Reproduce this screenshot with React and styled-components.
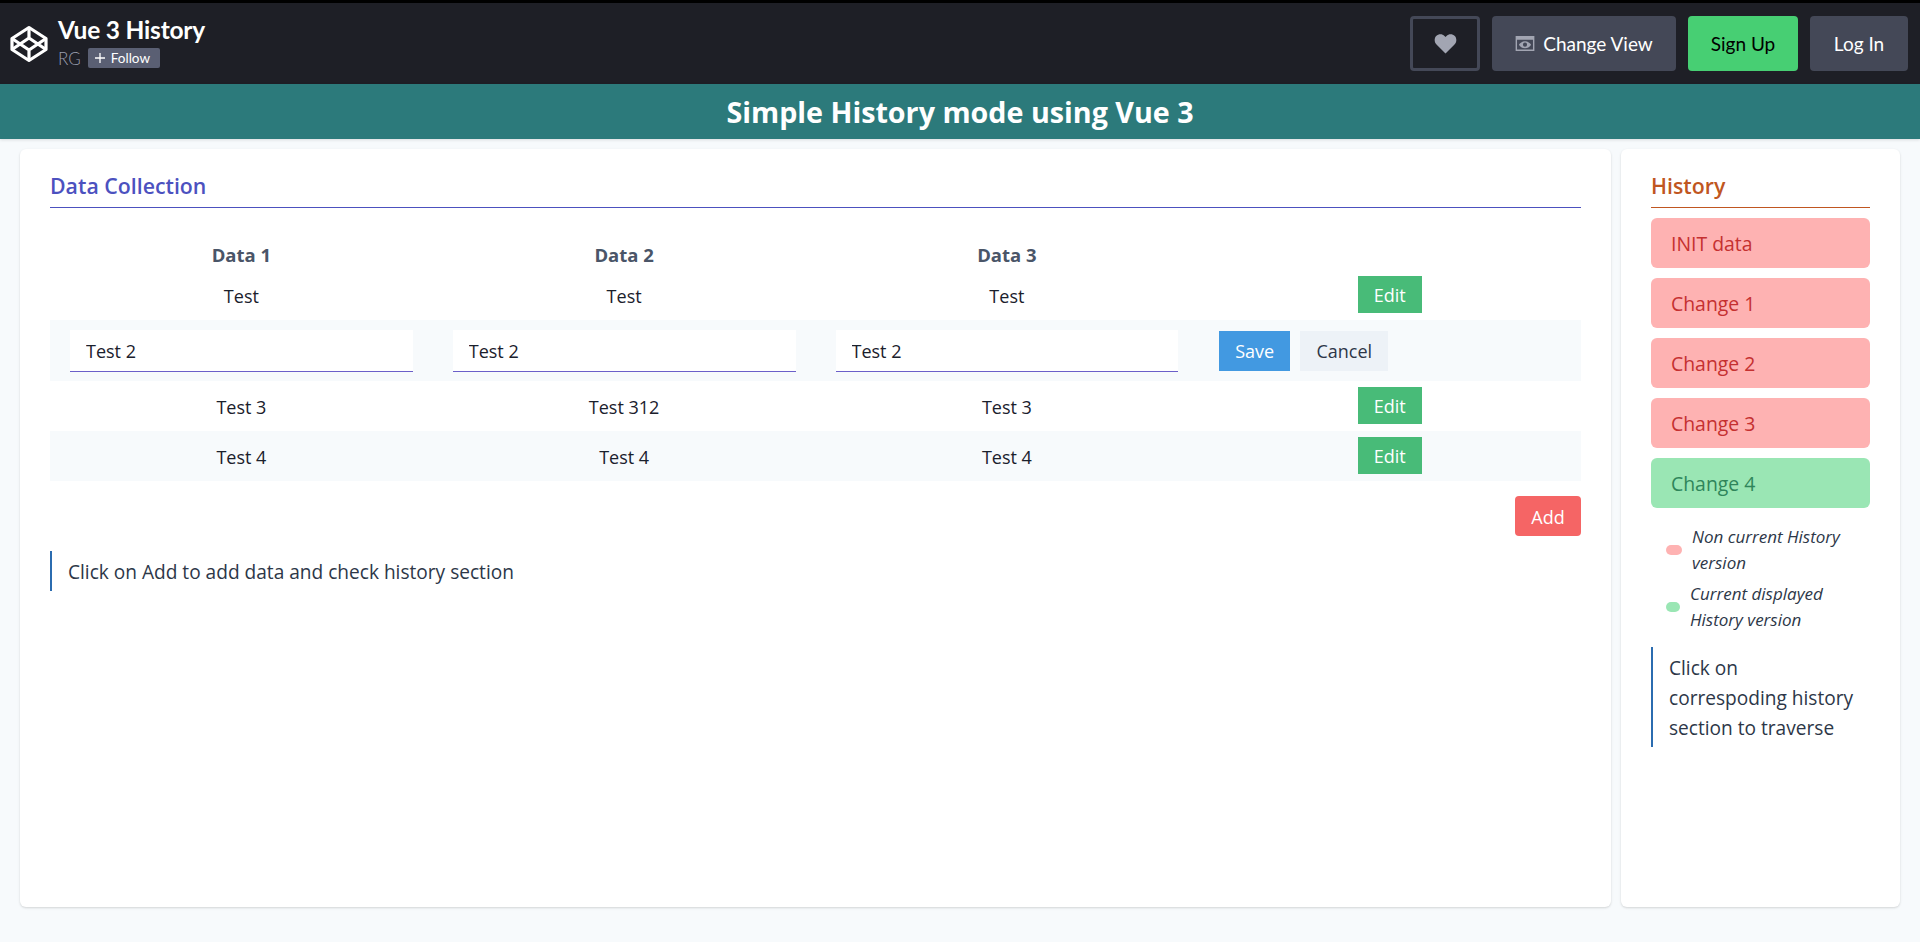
import React from 'react';
import styled, { createGlobalStyle } from 'styled-components';

const UI_FONT = '"Open Sans", "Noto Sans", sans-serif';
const PEN_FONT = 'Lato, "Open Sans", sans-serif';

const GlobalStyle = createGlobalStyle`
  html, body {
    margin: 0;
    padding: 0;
    height: 100%;
    background: #f7fafc;
    font-family: ${UI_FONT};
    color: #1a202c;
  }
  * {
    box-sizing: border-box;
  }
`;

const Page = styled.div`
  height: 942px;
  display: flex;
  flex-direction: column;
  overflow: hidden;
`;

const PenHeader = styled.header`
  height: 84px;
  flex: none;
  display: flex;
  align-items: center;
  justify-content: space-between;
  padding: 0 12px 0 10px;
  background: #1e1f26;
  border-top: 3px solid #000;
  font-family: ${PEN_FONT};
`;

const PenInfo = styled.div`
  display: flex;
  align-items: center;
  gap: 10px;
`;

const PenMeta = styled.div`
  display: flex;
  flex-direction: column;
  gap: 4px;
  margin-bottom: 3px;
`;

const PenTitle = styled.div`
  font-size: 24.5px;
  font-weight: 700;
  line-height: 28px;
  color: #fff;
  letter-spacing: -0.2px;
`;

const PenAuthor = styled.div`
  display: flex;
  align-items: center;
  gap: 7px;
  font-size: 17px;
  font-weight: 300;
  color: #9a9eae;
`;

const FollowBadge = styled.span`
  display: inline-flex;
  align-items: center;
  gap: 6px;
  width: 72px;
  height: 20px;
  padding-left: 7px;
  border-radius: 2px;
  background: #5a5f73;
  color: #fff;
  font-size: 13.5px;
  font-weight: 400;
`;

const PenActions = styled.div`
  display: flex;
  align-items: center;
  gap: 12px;
`;

const HeaderButton = styled.button`
  height: 55px;
  width: ${(p) => p.$w}px;
  padding: 0;
  display: inline-flex;
  align-items: center;
  justify-content: center;
  gap: 8px;
  border: 0;
  border-radius: 4px;
  background: ${(p) => p.$bg || '#444857'};
  color: ${(p) => p.$fg || '#fff'};
  font-family: ${PEN_FONT};
  font-size: 19px;
`;

const HeartButton = styled.button`
  width: 70px;
  height: 55px;
  display: inline-flex;
  align-items: center;
  justify-content: center;
  background: transparent;
  border: 3px solid #444857;
  border-radius: 4px;
`;

const Banner = styled.h1`
  height: 55px;
  flex: none;
  margin: 0;
  display: flex;
  align-items: center;
  justify-content: center;
  background: #2c7a7b;
  color: #fff;
  font-size: 28.7px;
  font-weight: 700;
  box-shadow: 0 1px 3px rgba(0, 0, 0, 0.12);
`;

const Workspace = styled.main`
  display: flex;
  gap: 10px;
  padding: 10px 20px 0;
`;

const Card = styled.section`
  height: 758px;
  padding: 20px 30px;
  background: #fff;
  border-radius: 6px;
  box-shadow: 0 1px 3px rgba(0, 0, 0, 0.1), 0 1px 2px rgba(0, 0, 0, 0.06);
`;

const DataCard = styled(Card)`
  flex: 1;
`;

const HistoryCard = styled(Card)`
  width: 279px;
  flex: none;
`;

const SectionTitle = styled.h2`
  margin: 0;
  height: 39px;
  font-size: 21.3px;
  font-weight: 600;
  line-height: 34px;
  color: ${(p) => p.$color};
  border-bottom: 1px solid ${(p) => p.$color};
`;

const Table = styled.table`
  width: 100%;
  margin-top: 22px;
  border-collapse: collapse;
  table-layout: fixed;
`;

const HeadCell = styled.th`
  height: 40px;
  padding: 8px 0 0;
  font-size: 18.5px;
  font-weight: 700;
  color: #4a5568;
`;

const Row = styled.tr`
  background: ${(p) => (p.$striped ? '#f7fafc' : 'transparent')};
`;

const Cell = styled.td`
  height: 50px;
  padding: 2px 0 0;
  text-align: center;
  font-size: 18px;
`;

const ActionCell = styled.td`
  height: ${(p) => (p.$editing ? 61 : 50)}px;
  padding: ${(p) => (p.$editing ? '0 20px 0 21px' : '6px 0 7px')};
  text-align: center;
`;

const InputCell = styled.td`
  height: 61px;
  padding: 0 20px;
`;

const EditInput = styled.input`
  display: block;
  width: 100%;
  height: 42px;
  padding: 1px 16px 0;
  border: 0;
  border-bottom: 1px solid #6b5fc9;
  background: #fff;
  color: #1a202c;
  font-family: inherit;
  font-size: 18px;
  outline: none;
`;

const ButtonGroup = styled.div`
  display: flex;
  gap: 10px;
  justify-content: flex-start;
`;

const ActionButton = styled.button`
  height: ${(p) => p.$h || 40}px;
  width: ${(p) => p.$w}px;
  padding: 1px 0 0;
  border: 0;
  border-radius: ${(p) => p.$radius || 0}px;
  background: ${(p) => p.$bg};
  color: ${(p) => p.$fg || '#fff'};
  font-family: inherit;
  font-size: 18px;
  vertical-align: middle;
`;

const AddRow = styled.div`
  display: flex;
  justify-content: flex-end;
  margin-top: 15px;
`;

const Note = styled.p`
  margin: 15px 0 0;
  padding: 6px 0 4px 16px;
  border-left: 2px solid #2b6cb0;
  font-size: 19.1px;
  line-height: 30px;
  color: #2d3748;
`;

const HistoryNote = styled(Note)`
  margin-top: 14px;
  padding-right: 15px;
`;

const HistoryList = styled.div`
  display: flex;
  flex-direction: column;
  gap: 10px;
  margin-top: 10px;
`;

const HistoryItem = styled.div`
  height: 50px;
  display: flex;
  align-items: center;
  padding: 0 20px;
  border-radius: 6px;
  font-size: 19.4px;
  background: ${(p) => (p.$current ? '#9ae6b4' : '#feb2b2')};
  color: ${(p) => (p.$current ? '#2f855a' : '#c53030')};
`;

const Legend = styled.div`
  margin-top: 16px;
  padding-left: 15px;
  display: flex;
  flex-direction: column;
  gap: 5px;
`;

const LegendRow = styled.div`
  display: flex;
  align-items: center;
  gap: 10px;
  font-size: 17px;
  font-style: italic;
  line-height: 26px;
  color: #2d3748;
`;

const Swatch = styled.span`
  flex: none;
  width: ${(p) => p.$w}px;
  height: 10px;
  border-radius: 5px;
  background: ${(p) => p.$color};
`;

const CodepenLogo = () => (
  <svg width="38" height="38" viewBox="0 0 38 38" fill="none" stroke="#fff" strokeWidth="3.2" strokeLinejoin="round">
    <path d="M19 2.5 36 13.5V24.5L19 35.5 2 24.5V13.5Z" />
    <path d="M19 2.5V13M19 25V35.5M2 13.5 19 25 36 13.5M2 24.5 19 13 36 24.5" />
  </svg>
);

const HeartIcon = () => (
  <svg width="23" height="20" viewBox="0 0 22 20" fill="#a2a5b2">
    <path d="M11 19.5 2 10.6C-.4 8-.4 4.2 1.7 2 4-.4 7.8-.4 10 1.9l1 1.1 1-1.1c2.2-2.3 6-2.3 8.3.1 2.1 2.2 2.1 6-.3 8.6Z" />
  </svg>
);

const ViewIcon = () => (
  <svg width="20" height="15" viewBox="0 0 20 16">
    <path fill="#a2a5b2" fillRule="evenodd" d="M0 0H20V16H0ZM1.5 4V14.5H18.5V4Z" />
    <path fill="#a2a5b2" fillRule="evenodd" d="M10 5.5C13 5.5 15.5 7.5 16.5 9.2 15.5 11 13 13 10 13S4.5 11 3.5 9.2C4.5 7.5 7 5.5 10 5.5ZM10 7A2.2 2.2 0 1 0 10 11.400 2.200 2.200 0 1 0 10 7Z" />
  </svg>
);

const PlusIcon = () => (
  <svg width="10" height="10" viewBox="0 0 10 10" stroke="#fff" strokeWidth="1.3">
    <path d="M5 0V10M0 5H10" />
  </svg>
);

const rows = [
  { id: 1, cells: ['Test', 'Test', 'Test'] },
  { id: 2, cells: ['Test 2', 'Test 2', 'Test 2'], editing: true },
  { id: 3, cells: ['Test 3', 'Test 312', 'Test 3'] },
  { id: 4, cells: ['Test 4', 'Test 4', 'Test 4'] },
];

const history = ['INIT data', 'Change 1', 'Change 2', 'Change 3', 'Change 4'];

export default function App() {
  return (
    <Page>
      <GlobalStyle />
      <PenHeader>
        <PenInfo>
          <CodepenLogo />
          <PenMeta>
            <PenTitle>Vue 3 History</PenTitle>
            <PenAuthor>
              RG
              <FollowBadge>
                <PlusIcon />
                Follow
              </FollowBadge>
            </PenAuthor>
          </PenMeta>
        </PenInfo>
        <PenActions>
          <HeartButton aria-label="Love">
            <HeartIcon />
          </HeartButton>
          <HeaderButton $w={184}>
            <ViewIcon />
            Change View
          </HeaderButton>
          <HeaderButton $w={110} $bg="#47cf73" $fg="#000">Sign Up</HeaderButton>
          <HeaderButton $w={98}>Log In</HeaderButton>
        </PenActions>
      </PenHeader>
      <Banner>Simple History mode using Vue 3</Banner>
      <Workspace>
        <DataCard>
          <SectionTitle $color="#4c51bf">Data Collection</SectionTitle>
          <Table>
            <thead>
              <tr>
                <HeadCell>Data 1</HeadCell>
                <HeadCell>Data 2</HeadCell>
                <HeadCell>Data 3</HeadCell>
                <HeadCell />
              </tr>
            </thead>
            <tbody>
              {rows.map((row, i) => (
                <Row key={row.id} $striped={i % 2 === 1}>
                  {row.cells.map((value, c) =>
                    row.editing ? (
                      <InputCell key={c}>
                        <EditInput defaultValue={value} />
                      </InputCell>
                    ) : (
                      <Cell key={c}>{value}</Cell>
                    )
                  )}
                  <ActionCell $editing={row.editing}>
                    {row.editing ? (
                      <ButtonGroup>
                        <ActionButton $bg="#4299e1" $w={71}>Save</ActionButton>
                        <ActionButton $bg="#edf2f7" $fg="#2d3748" $w={88}>Cancel</ActionButton>
                      </ButtonGroup>
                    ) : (
                      <ActionButton $bg="#48bb78" $w={64} $h={37}>Edit</ActionButton>
                    )}
                  </ActionCell>
                </Row>
              ))}
            </tbody>
          </Table>
          <AddRow>
            <ActionButton $bg="#f56565" $w={66} $radius={4}>Add</ActionButton>
          </AddRow>
          <Note>Click on Add to add data and check history section</Note>
        </DataCard>
        <HistoryCard>
          <SectionTitle $color="#c05621">History</SectionTitle>
          <HistoryList>
            {history.map((label, i) => (
              <HistoryItem key={label} $current={i === history.length - 1}>{label}</HistoryItem>
            ))}
          </HistoryList>
          <Legend>
            <LegendRow>
              <Swatch $w={16} $color="#feb2b2" />
              <span>Non current History version</span>
            </LegendRow>
            <LegendRow>
              <Swatch $w={14} $color="#9ae6b4" />
              <span>Current displayed History version</span>
            </LegendRow>
          </Legend>
          <HistoryNote>Click on correspoding history section to traverse</HistoryNote>
        </HistoryCard>
      </Workspace>
    </Page>
  );
}
